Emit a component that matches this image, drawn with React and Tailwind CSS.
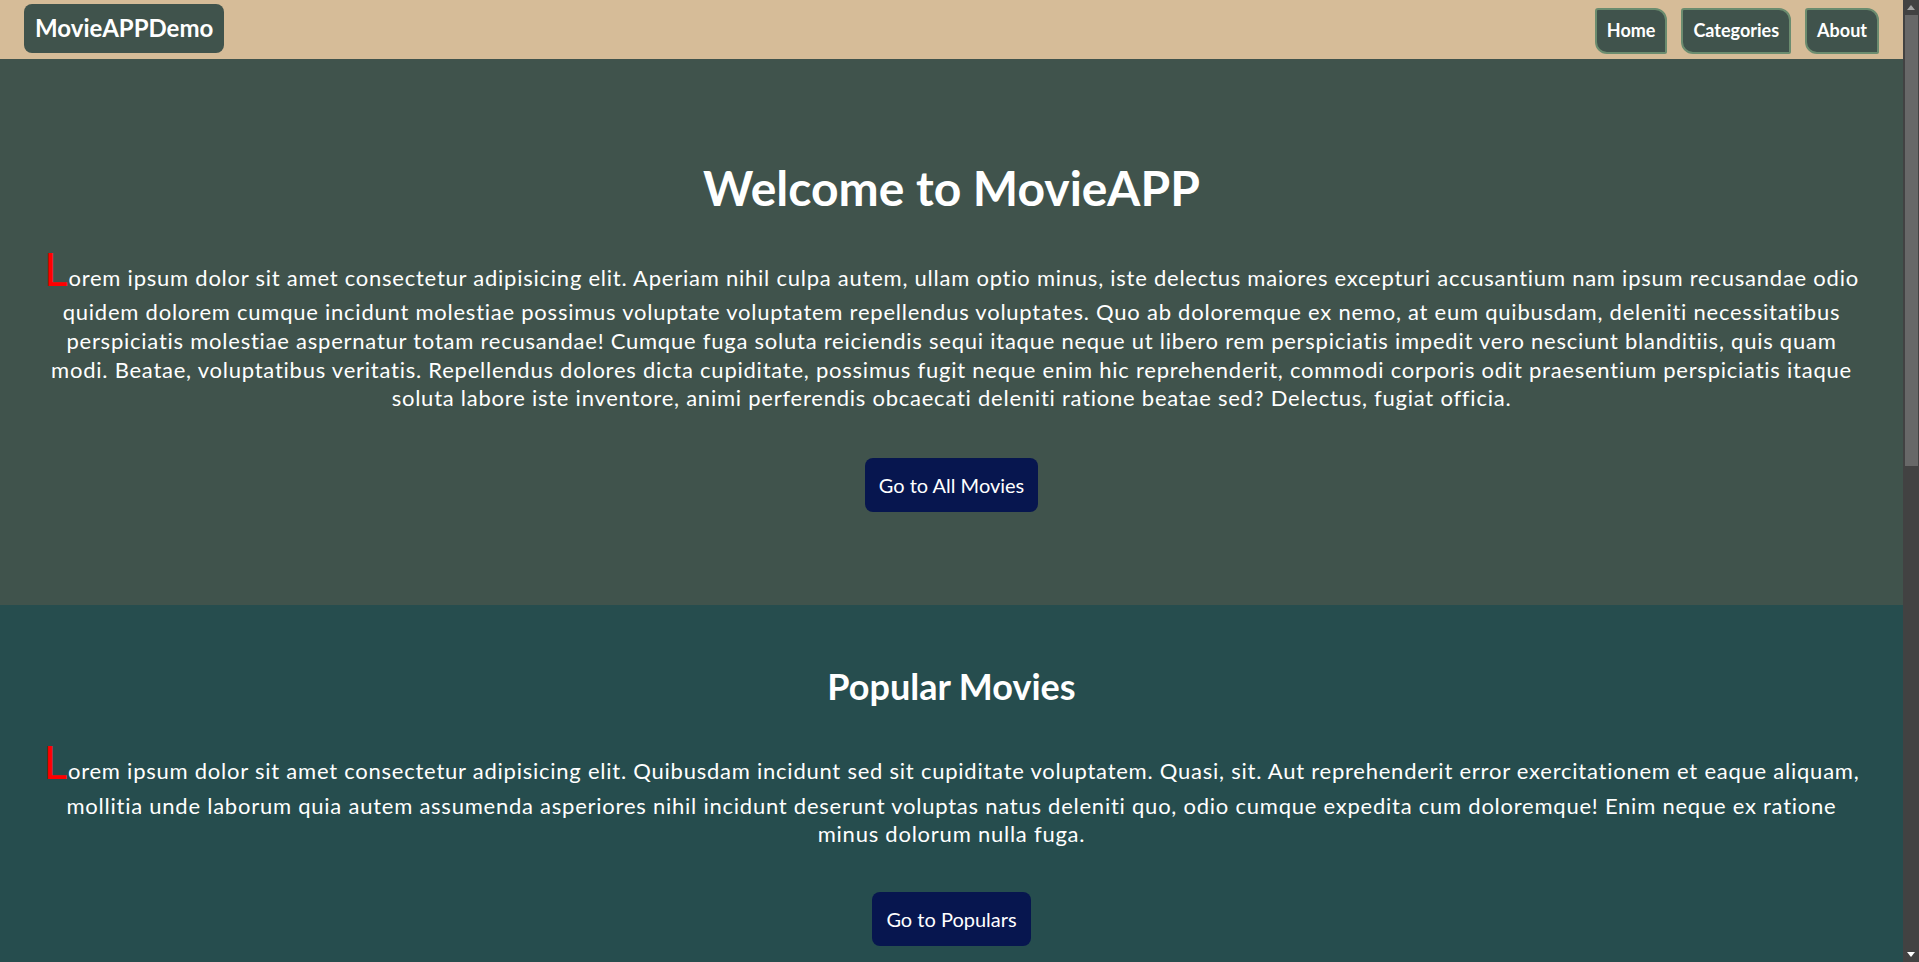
import React from "react";

const heroText =
  "Lorem ipsum dolor sit amet consectetur adipisicing elit. Aperiam nihil culpa autem, ullam optio minus, iste delectus maiores excepturi accusantium nam ipsum recusandae odio quidem dolorem cumque incidunt molestiae possimus voluptate voluptatem repellendus voluptates. Quo ab doloremque ex nemo, at eum quibusdam, deleniti necessitatibus perspiciatis molestiae aspernatur totam recusandae! Cumque fuga soluta reiciendis sequi itaque neque ut libero rem perspiciatis impedit vero nesciunt blanditiis, quis quam modi. Beatae, voluptatibus veritatis. Repellendus dolores dicta cupiditate, possimus fugit neque enim hic reprehenderit, commodi corporis odit praesentium perspiciatis itaque soluta labore iste inventore, animi perferendis obcaecati deleniti ratione beatae sed? Delectus, fugiat officia.";

const popularText =
  "Lorem ipsum dolor sit amet consectetur adipisicing elit. Quibusdam incidunt sed sit cupiditate voluptatem. Quasi, sit. Aut reprehenderit error exercitationem et eaque aliquam, mollitia unde laborum quia autem assumenda asperiores nihil incidunt deserunt voluptas natus deleniti quo, odio cumque expedita cum doloremque! Enim neque ex ratione minus dolorum nulla fuga.";

const topRatedText =
  "Lorem ipsum dolor sit amet consectetur adipisicing elit. Nesciunt, voluptates eius? Dolorum tempora officiis quos aut cumque, ipsa velit eveniet magnam ratione quae inventore asperiores, doloribus sequi natus nisi repudiandae.";

const navLinks = ["Home", "Categories", "About"];

// 첫 글자 강조 문단
const IntroText = ({ children, className = "" }) => (
  <p
    className={`px-[36px] text-center text-[22px] leading-[1.3] tracking-[0.76px] text-white [font-variant-ligatures:none] first-letter:text-[46px] first-letter:text-[#ff0000] ${className}`}
  >
    {children}
  </p>
);

const ActionButton = ({ label, className = "" }) => (
  <button
    className={`rounded-lg bg-[#07164f] px-[14px] py-[15px] text-[20px] leading-[1.2] text-white ${className}`}
  >
    {label}
  </button>
);

// 오른쪽 스크롤바 (다크 테마)
const ScrollTrack = () => (
  <aside className="flex w-[16px] shrink-0 flex-col bg-[#424242]">
    <div className="flex h-[15px] items-center justify-center">
      <svg width="8" height="5" viewBox="0 0 8 5">
        <polygon points="4,0 8,5 0,5" fill="#a3a3a3" />
      </svg>
    </div>
    <div className="ml-[2px] mr-[1px] h-[451px] bg-[#686868]" />
    <div className="flex-1" />
    <div className="flex h-[15px] items-center justify-center">
      <svg width="8" height="5" viewBox="0 0 8 5">
        <polygon points="0,0 8,0 4,5" fill="#ffffff" />
      </svg>
    </div>
  </aside>
);

const App = () => {
  return (
    <div className="flex h-screen overflow-hidden font-['Lato','Liberation_Sans',sans-serif]">
      <main className="min-w-0 flex-1 overflow-y-auto [scrollbar-width:none]">
        {/* 헤더 */}
        <header className="flex h-[59px] items-start justify-between bg-[#d6bc98] px-6 pt-1">
          <div className="rounded-lg bg-[#40534c] px-[11px] py-[10px] text-[24px] font-bold leading-[1.2] text-white">
            MovieAPPDemo
          </div>
          <nav className="mt-1 flex gap-[14px]">
            {navLinks.map((link) => (
              <a
                key={link}
                href="#"
                className="rounded-tl-[3px] rounded-tr-[12px] rounded-bl-[12px] rounded-br-[2px] border-2 border-[#6b8c6f] bg-[#40534c] px-[10px] py-[10px] text-[18px] font-bold leading-[1.2] text-white"
              >
                {link}
              </a>
            ))}
          </nav>
        </header>

        {/* 메인 소개 */}
        <section className="flex flex-col items-center bg-[#40534c] pt-[100px] pb-[93px]">
          <h1 className="text-[48px] font-bold leading-[1.2] text-white">
            Welcome to MovieAPP
          </h1>
          <IntroText className="mt-[22px]">{heroText}</IntroText>
          <ActionButton label="Go to All Movies" className="mt-[45px]" />
        </section>

        {/* 인기 영화 */}
        <section className="flex flex-col items-center bg-[#264d4e] pt-[60px] pb-[92px]">
          <h2 className="text-[36px] font-bold leading-[1.2] text-white">
            Popular Movies
          </h2>
          <IntroText className="mt-[24px]">{popularText}</IntroText>
          <ActionButton label="Go to Populars" className="mt-[43px]" />
        </section>

        {/* 평점 높은 영화 */}
        <section className="flex flex-col items-center bg-[#40534c] pt-[60px] pb-[92px]">
          <h2 className="text-[36px] font-bold leading-[1.2] text-white">
            Top Rated Movies
          </h2>
          <IntroText className="mt-[24px]">{topRatedText}</IntroText>
          <ActionButton label="Go to Top Rated" className="mt-[43px]" />
        </section>

        {/* 푸터 */}
        <footer className="flex h-[530px] flex-col items-center justify-center gap-3 bg-[#d6bc98] text-[18px] text-[#40534c]">
          <div className="text-[24px] font-bold">MovieAPPDemo</div>
          <div>© 2024 MovieAPP. All rights reserved.</div>
        </footer>
      </main>
      <ScrollTrack />
    </div>
  );
};

export default App;
